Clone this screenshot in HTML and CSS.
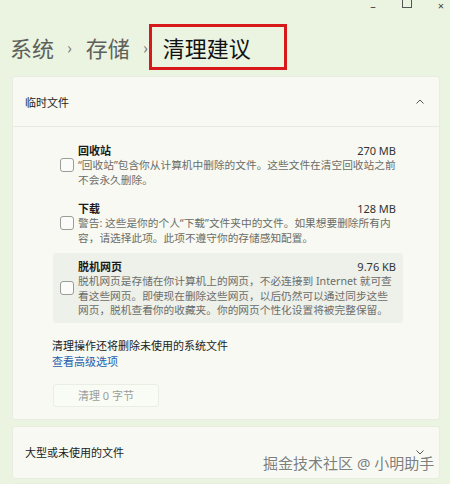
FILE: index.html
```html
<!DOCTYPE html>
<html lang="zh-CN">
<head>
  <meta charset="UTF-8">
  <title>清理建议</title>
  <link rel="stylesheet" href="styles.css">
</head>
<body>
<div class="win">
  <!-- 窗口按钮 -->
  <div class="caption">
    <span class="cap-btn">&#8211;</span>
    <span class="cap-btn box"></span>
    <span class="cap-btn">&#215;</span>
  </div>

  <!-- 面包屑 -->
  <div class="crumbs">
    <span class="crumb">系统</span>
    <span class="sep">&#8250;</span>
    <span class="crumb">存储</span>
    <span class="sep">&#8250;</span>
    <span class="crumb current">清理建议</span>
  </div>

  <!-- 临时文件 -->
  <div class="card">
    <div class="card-head">
      <span>临时文件</span>
      <svg class="chev" width="8" height="5" viewBox="0 0 8 5"><path d="M0.5 4.5 L4 1 L7.5 4.5" fill="none" stroke="#555" stroke-width="1"/></svg>
    </div>
    <div class="card-body">
      <div class="item">
        <span class="check"></span>
        <div class="info">
          <div class="info-top"><b>回收站</b><span>270 MB</span></div>
          <p>“回收站”包含你从计算机中删除的文件。这些文件在清空回收站之前不会永久删除。</p>
        </div>
      </div>
      <div class="item">
        <span class="check"></span>
        <div class="info">
          <div class="info-top"><b>下载</b><span>128 MB</span></div>
          <p>警告: 这些是你的个人“下载”文件夹中的文件。如果想要删除所有内容，请选择此项。此项不遵守你的存储感知配置。</p>
        </div>
      </div>
      <div class="item hover">
        <span class="check"></span>
        <div class="info">
          <div class="info-top"><b>脱机网页</b><span>9.76 KB</span></div>
          <p>脱机网页是存储在你计算机上的网页，不必连接到 Internet 就可查看这些网页。即使现在删除这些网页，以后仍然可以通过同步这些网页，脱机查看你的收藏夹。你的网页个性化设置将被完整保留。</p>
        </div>
      </div>

      <div class="note">清理操作还将删除未使用的系统文件</div>
      <a class="link">查看高级选项</a>
      <div class="btn">清理 0 字节</div>
    </div>
  </div>

  <!-- 大型或未使用的文件 -->
  <div class="card small">
    <div class="card-head">
      <span>大型或未使用的文件</span>
      <svg class="chev" width="8" height="5" viewBox="0 0 8 5"><path d="M0.5 0.5 L4 4 L7.5 0.5" fill="none" stroke="#555" stroke-width="1"/></svg>
    </div>
  </div>
  <div class="card next"></div>

  <div class="mark">掘金技术社区 @ 小明助手</div>
</div>
</body>
</html>
```

FILE: styles.css
```css
* {
  padding: 0;
  margin: 0;
  box-sizing: border-box;
}

body {
  width: 450px;
  height: 484px;
  overflow: hidden;
  background: #ebf3e1;
  font-family: "Noto Sans", "Noto Sans CJK SC", sans-serif;
  color: #1b1b1b;
}

.win {
  position: relative;
  height: 484px;
}

.caption {
  display: flex;
  justify-content: flex-end;
  height: 14px;
  margin-right: -8px;
}

.cap-btn {
  width: 34px;
  text-align: center;
  font-size: 11px;
  line-height: 12px;
  color: #444;
}

.cap-btn.box::before {
  content: "";
  display: inline-block;
  width: 8px;
  height: 7px;
  border: 1px solid #555;
  border-top: 0;
  vertical-align: top;
}

.crumbs {
  display: flex;
  align-items: center;
  height: 62px;
  padding: 4px 0 0 10px;
  font-size: 22px;
  color: #5d625b;
  font-family: "Noto Sans CJK SC", sans-serif;
}

.sep {
  font-size: 16px;
  margin: 0 14px 0 13px;
  color: #777;
}

.crumb.current {
  color: #111;
  padding: 4px 33px 4px 11px;
  margin-left: -13px;
  border: 3px solid #d7191c;
}

.card {
  margin: 0 10px 0 12px;
  background: #f7f9f2;
  border: 1px solid #e8ede0;
  border-radius: 3px;
}

.card-head {
  display: flex;
  justify-content: space-between;
  align-items: center;
  height: 50px;
  padding: 0 15px 0 12px;
  font-size: 11px;
  color: #222;
}

.card > .card-head {
  border-bottom: 1px solid #e6eadf;
}

.card.small > .card-head {
  border-bottom: 0;
}

.card-body {
  padding: 10px 36px 12px 40px;
}

.item {
  display: flex;
  align-items: center;
  padding: 6px 5px 5px 7px;
  margin-bottom: 3px;
  border-radius: 3px;
}

.item.hover {
  background: #eef0ea;
}

.check {
  flex: none;
  width: 14px;
  height: 14px;
  margin-right: 4px;
  border: 1px solid #9a9c97;
  border-radius: 3px;
  background: #fbfcf9;
}

.info {
  width: 318px;
}

.info-top {
  display: flex;
  justify-content: space-between;
  font-size: 11px;
  line-height: 15px;
}

.info-top span {
  color: #333;
}

.info p {
  font-size: 10.7px;
  line-height: 14.5px;
  color: #6b6d69;
}

.note {
  margin: 15px 0 0 -1px;
  font-size: 11px;
  line-height: 16px;
  color: #222;
}

.link {
  display: block;
  margin-left: -1px;
  font-size: 11px;
  line-height: 16px;
  color: #1f5fae;
}

.btn {
  width: 106px;
  height: 23px;
  margin-top: 14px;
  line-height: 21px;
  text-align: center;
  font-size: 11px;
  color: #9c9e99;
  background: #f9fbf5;
  border: 1px solid #eaede4;
  border-radius: 3px;
}

.card.small {
  margin-top: 6px;
}

.card.small .card-head {
  height: 51px;
}

.card.next {
  margin-top: 4px;
  height: 20px;
}

.mark {
  position: absolute;
  left: 263px;
  top: 452px;
  white-space: nowrap;
  font-size: 15px;
  line-height: 22px;
  color: #7d7f7b;
  text-shadow: 0 0 2px #fff, 0 0 2px #fff;
}
```
